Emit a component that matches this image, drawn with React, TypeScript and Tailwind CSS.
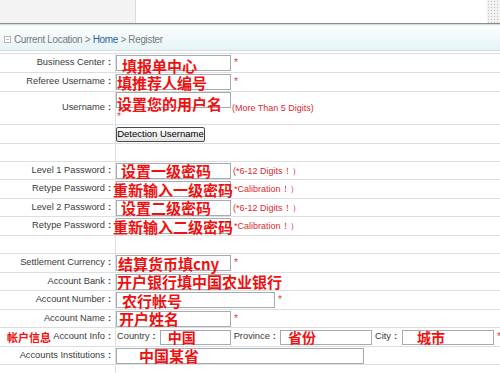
import React from "react";

type FieldProps = {
  w: string;
  h?: string;
  text?: string;
  tx?: string;
  size?: string;
  ml?: string;
};

function Field({ w, h = "h-[16px]", text, tx = "left-[5px]", size = "text-[15px]", ml = "" }: FieldProps) {
  return (
    <div className={`relative shrink-0 border border-[#a3abb3] bg-white ${w} ${h} ${ml}`}>
      {text && (
        <span
          className={`absolute top-0 bottom-0 flex items-center whitespace-nowrap font-['Noto_Sans_CJK_SC',sans-serif] font-bold leading-none text-[#ee1111] ${size} ${tx}`}
        >
          {text}
        </span>
      )}
    </div>
  );
}

function Star({ ml = "ml-[3px]" }: { ml?: string }) {
  return <span className={`text-[10px] leading-[10px] text-[#e23a3a] ${ml}`}>*</span>;
}

function Note({ children, ml = "ml-[2px]" }: { children: React.ReactNode; ml?: string }) {
  return <span className={`whitespace-nowrap text-[9px] leading-[10px] text-[#e0292b] ${ml}`}>{children}</span>;
}

type RowProps = {
  h: string;
  label?: string;
  pre?: React.ReactNode;
  children?: React.ReactNode;
  contentClass?: string;
};

function Row({ h, label, pre, children, contentClass = "flex items-center" }: RowProps) {
  return (
    <div className={`flex border-b border-[#dedede] ${h}`}>
      <div className="flex w-[116px] shrink-0 items-center justify-end border-r border-[#dedede] pr-[4px] text-[9.3px] text-[#3a3a3a]">
        {pre}
        {label && (
          <>
            <span className="whitespace-nowrap">{label}</span>
            <span className="ml-[3px] font-bold">:</span>
          </>
        )}
      </div>
      <div className={`min-w-0 flex-1 ${contentClass}`}>{children}</div>
    </div>
  );
}

export default function App() {
  return (
    <div className="h-[373px] w-[500px] overflow-hidden bg-white font-['Liberation_Sans',Arial,sans-serif]">
      {/* top panel */}
      <div className="flex h-[24px] border-b border-[#8c8c8c]">
        <div className="w-[136px] border-r border-[#dcdcdc] bg-[#f3f3f3]" />
        <div className="flex-1" />
        <div className="w-[13px] bg-[#f1f1f1] bg-[radial-gradient(circle,#bdbdbd_0.6px,transparent_0.9px)] bg-size-[3px_3px]" />
      </div>
      <div className="h-[2px] bg-linear-to-b from-[#cfcfcf] to-white" />

      {/* breadcrumb */}
      <div className="flex h-[25px] items-center border-b border-[#d3dcdf] bg-linear-to-b from-[#fcfeff] to-[#e5f3f7] pl-[4px] pt-[2px]">
        <div className="flex h-[7px] w-[7px] flex-col items-center justify-center gap-[1px] border border-[#b5b5b5] bg-white">
          <div className="h-px w-[3px] bg-[#b5b5b5]" />
        </div>
        <span className="ml-[3px] whitespace-nowrap text-[10px] tracking-[-0.35px] text-[#7a7a7a]">
          Current Location &gt; <span className="text-[#2c5d9c]">Home</span> &gt; Register
        </span>
      </div>
      <div className="h-[2px]" />

      {/* form table */}
      <div className="border-t border-[#dedede]">
        <Row h="h-[19px]" label="Business Center">
          <Field w="w-[115px]" text="填报单中心" tx="left-[5px] translate-y-[2px]" />
          <Star />
        </Row>
        <Row h="h-[19px]" label="Referee Username">
          <Field w="w-[115px]" text="填推荐人编号" tx="left-[0px]" />
          <Star />
        </Row>
        <Row h="h-[33px]" label="Username" contentClass="flex flex-col items-start">
          <div className="flex items-start">
            <Field w="w-[115px]" text="设置您的用户名" tx="left-[0px] translate-y-[3px]" />
            <Note ml="ml-[1px] mt-[11px]">(More Than 5 Digits)</Note>
          </div>
          <Star ml="ml-[1px] -mt-[1px]" />
        </Row>
        <Row h="h-[19px]">
          <button className="flex h-[15px] w-[89px] items-center justify-center rounded-[2px] border border-[#4a4a4a] bg-linear-to-b from-white to-[#e2e2e2] text-[9.5px] leading-none text-black">
            Detection Username
          </button>
        </Row>
        <Row h="h-[18px]" />
        <Row h="h-[18px]" label="Level 1 Password">
          <Field w="w-[115px]" text="设置一级密码" tx="left-[4px]" />
          <Note>(*6-12 Digits！）</Note>
        </Row>
        <Row h="h-[19px]" label="Retype Password">
          <Field w="w-[115px]" text="重新输入一级密码" tx="left-[-4px]" />
          <Note ml="ml-[3px]">*Calibration！）</Note>
        </Row>
        <Row h="h-[18px]" label="Level 2 Password">
          <Field w="w-[115px]" text="设置二级密码" tx="left-[4px]" />
          <Note>(*6-12 Digits！）</Note>
        </Row>
        <Row h="h-[19px]" label="Retype Password">
          <Field w="w-[115px]" text="重新输入二级密码" tx="left-[-4px]" />
          <Note ml="ml-[3px]">*Calibration！）</Note>
        </Row>
        <Row h="h-[18px]" />
        <Row h="h-[19px]" label="Settlement Currency">
          <Field w="w-[115px]" text="结算货币填cny" tx="left-[1px]" />
          <Star />
        </Row>
        <Row h="h-[18px]" label="Account Bank">
          <Field w="w-[115px]" text="开户银行填中国农业银行" tx="left-[0px]" />
        </Row>
        <Row h="h-[19px]" label="Account Number">
          <Field w="w-[159px]" text="农行帐号" tx="left-[5px]" />
          <Star />
        </Row>
        <Row h="h-[18px]" label="Account Name">
          <Field w="w-[115px]" text="开户姓名" tx="left-[2px]" />
          <Star />
        </Row>
        <Row
          h="h-[19px]"
          label="Account Info"
          pre={
            <span className="mr-auto whitespace-nowrap pl-[7px] font-['Noto_Sans_CJK_SC',sans-serif] text-[11px] font-bold leading-none text-[#ee1111]">
              帐户信息
            </span>
          }
        >
          <span className="whitespace-nowrap pl-[1px] text-[9.3px] text-[#3a3a3a]">
            Country<span className="ml-[3px] font-bold">:</span>
          </span>
          <Field w="w-[71px]" h="h-[15px]" ml="ml-[4px]" text="中国" tx="left-[7px]" size="text-[14px]" />
          <span className="ml-[3px] whitespace-nowrap text-[9.3px] text-[#3a3a3a]">
            Province<span className="ml-[3px] font-bold">:</span>
          </span>
          <Field w="w-[92px]" h="h-[15px]" ml="ml-[4px]" text="省份" tx="left-[7px]" size="text-[14px]" />
          <span className="ml-[3px] whitespace-nowrap text-[9.3px] text-[#3a3a3a]">
            City<span className="ml-[3px] font-bold">:</span>
          </span>
          <Field w="w-[92px]" h="h-[15px]" ml="ml-[5px]" text="城市" tx="left-[14px]" size="text-[14px]" />
          <Star />
        </Row>
        <Row h="h-[18px]" label="Accounts Institutions">
          <Field w="w-[248px]" text="中国某省" tx="left-[22px]" />
        </Row>
        <Row h="h-[20px]" />
      </div>
    </div>
  );
}
